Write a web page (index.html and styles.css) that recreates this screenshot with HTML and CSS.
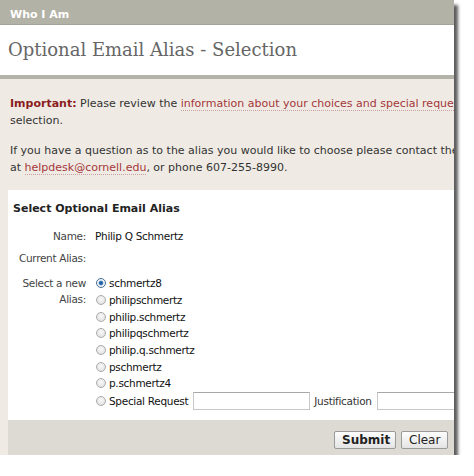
FILE: index.html
```html
<!DOCTYPE html>
<html>
<head>
<meta charset="utf-8">
<link rel="stylesheet" href="styles.css">
</head>
<body>
<div class="panel">
  <div class="tab">Who I Am</div>
  <div class="title"><h1>Optional Email Alias - Selection</h1></div>
  <div class="content">
    <p class="intro"><strong class="imp">Important:</strong> Please review the <a class="lnk">information about your choices and special requests</a> before making your<br>selection.</p>
    <p class="intro">If you have a question as to the alias you would like to choose please contact the IT Service Desk<br>at <a class="lnk">helpdesk@cornell.edu</a>, or phone 607-255-8990.</p>
    <div class="formbox">
      <div class="form">
        <h2>Select Optional Email Alias</h2>
        <div class="grid">
          <div class="lbl">Name:</div>
          <div class="val">Philip Q Schmertz</div>
          <div class="lbl">Current Alias:</div>
          <div class="val"></div>
          <div class="lbl sel">Select a new Alias:</div>
          <div class="val options">
            <label class="opt"><input type="radio" name="a" checked> schmertz8</label>
            <label class="opt"><input type="radio" name="a"> philipschmertz</label>
            <label class="opt"><input type="radio" name="a"> philip.schmertz</label>
            <label class="opt"><input type="radio" name="a"> philipqschmertz</label>
            <label class="opt"><input type="radio" name="a"> philip.q.schmertz</label>
            <label class="opt"><input type="radio" name="a"> pschmertz</label>
            <label class="opt"><input type="radio" name="a"> p.schmertz4</label>
            <div class="opt special"><label class="opt"><input type="radio" name="a"> Special Request</label><input class="txt" type="text"><span class="just">Justification</span><input class="txt" type="text"></div>
          </div>
        </div>
      </div>
      <div class="footer">
        <button class="btn submit">Submit</button>
        <button class="btn">Clear</button>
      </div>
    </div>
  </div>
</div>
</body>
</html>
```

FILE: styles.css
```css
html, body {
  margin: 0;
  padding: 0;
  background: #ffffff;
}
body {
  font-family: "DejaVu Sans", Verdana, sans-serif;
  font-size: 11px;
  color: #222;
}
.panel {
  width: 454px;
  height: 455px;
  overflow: hidden;
  background: #efebe4;
  box-shadow: 4px 5px 3px rgba(40, 40, 40, 0.75);
  display: flex;
  flex-direction: column;
}
.tab {
  height: 25px;
  background: #b3b2a7;
  color: #fff;
  font-weight: bold;
  font-size: 11px;
  line-height: 29px;
  padding-left: 10px;
  border-bottom: 1px solid #a4a39a;
  box-sizing: border-box;
}
.title {
  background: #fff;
  height: 50px;
  border-bottom: 4px solid #b4b3aa;
}
.title h1 {
  margin: 0;
  padding: 14px 0 0 8px;
  font-family: "DejaVu Serif", Georgia, serif;
  font-weight: normal;
  font-size: 18px;
  line-height: 22px;
  color: #666;
  white-space: nowrap;
}
.content {
  flex: 1;
  padding: 17px 0 0 8px;
  display: flex;
  flex-direction: column;
}
.intro {
  margin: 0 0 14px 2px;
  white-space: nowrap;
  line-height: 16.5px;
  color: #333;
}
.imp {
  color: #8a1d1d;
}
.lnk {
  color: #a5373a;
  text-decoration: none;
  border-bottom: 1px dotted #c9a0a0;
}
.formbox {
  width: 560px;
  flex: 1;
  display: flex;
  flex-direction: column;
}
.form {
  background: #fff;
  padding: 12px 0 0 5px;
  height: 218px;
  font-size: 10.5px;
  letter-spacing: -0.3px;
}
.form h2 {
  margin: 0 0 13px 0;
  font-size: 11px;
  line-height: 13px;
  font-weight: bold;
  color: #222;
  letter-spacing: 0;
}
.grid {
  display: grid;
  grid-template-columns: 73px 1fr;
  column-gap: 9px;
  row-gap: 6px;
  line-height: 16px;
}
.lbl {
  text-align: right;
  color: #444;
}
.lbl.sel {
  margin-top: 3px;
  padding-left: 6px;
}
.val {
  color: #111;
  min-height: 16px;
}
.options {
  display: flex;
  flex-direction: column;
  margin-top: 3px;
}
.opt {
  display: flex;
  align-items: center;
  white-space: nowrap;
  height: 16.7px;
}
.opt input[type=radio] {
  -webkit-appearance: none;
  appearance: none;
  width: 10px;
  height: 10px;
  margin: 0 3px 0 1px;
  border-radius: 50%;
  border: 1px solid #ababab;
  background: radial-gradient(circle at 50% 40%, #f9f9f9 0%, #e4e4e4 70%, #d0d0d0 100%);
  box-sizing: border-box;
}
.opt input[type=radio]:checked {
  border-color: #4a6f96;
  background: radial-gradient(circle at 50% 50%, #1e5a96 0%, #2f6fb0 30%, #e8eef5 48%, #ffffff 100%);
}
.special {
  height: 18px;
}
.txt {
  width: 117px;
  height: 18px;
  box-sizing: border-box;
  border: 1px solid #c8c8c8;
  border-top-color: #a8a8a8;
  margin: 0 0 0 5px;
  padding: 0;
  background: #fff;
}
.just {
  margin-left: 4px;
  color: #333;
}
.footer {
  flex: 1;
  background: #dcdad2;
  display: flex;
  align-items: flex-start;
  padding: 11px 0 0 326px;
  gap: 5px;
}
.btn {
  font-family: "DejaVu Sans", Verdana, sans-serif;
  font-size: 12px;
  height: 18px;
  padding: 0 7px;
  border: 1px solid #9a9a9a;
  border-radius: 2px;
  background: linear-gradient(#fdfdfd, #e4e4e4);
  color: #222;
  line-height: 16px;
}
.submit {
  font-weight: bold;
  width: 62px;
}
```
